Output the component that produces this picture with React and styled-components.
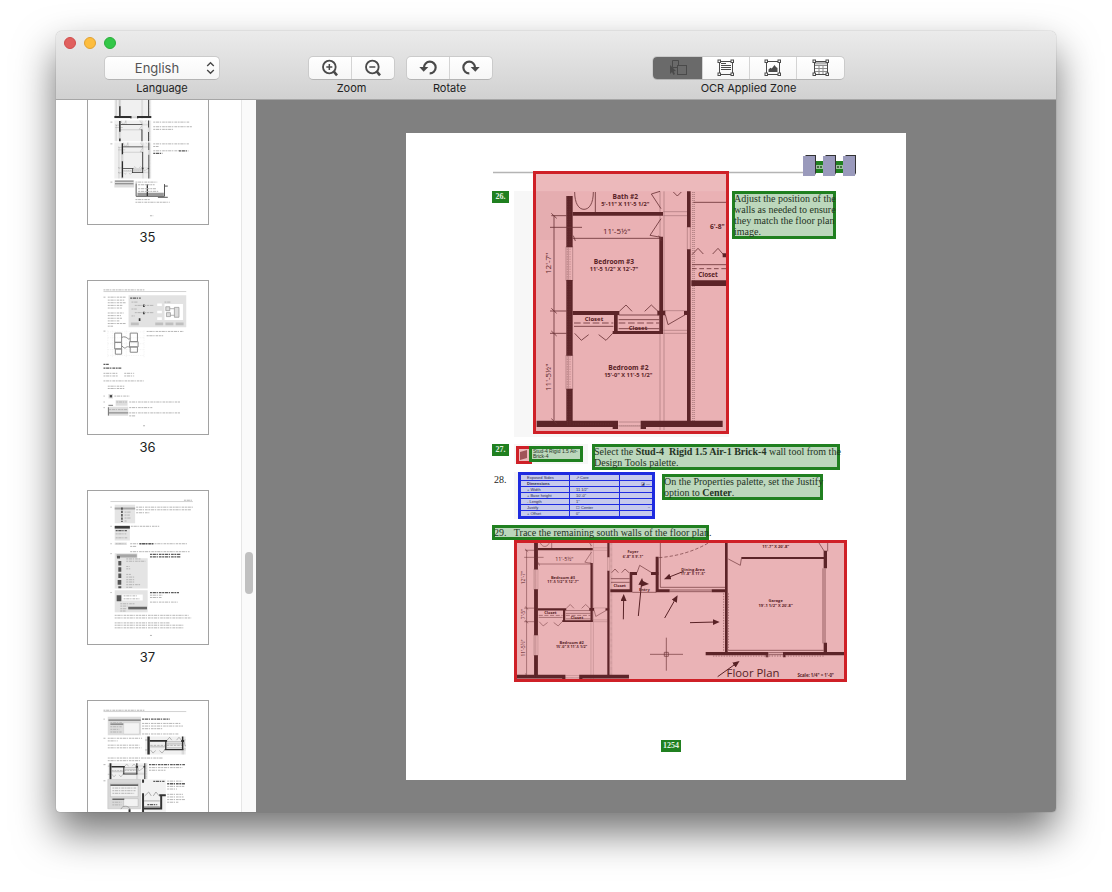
import React, { useState } from "react";
import styled, { createGlobalStyle } from "styled-components";

const GlobalStyle = createGlobalStyle`
  body {
    margin: 0;
    background: #ffffff;
    font-family: Inter, "Liberation Sans", sans-serif;
    color: #222222;
  }
  * {
    box-sizing: border-box;
  }
`;

const Desktop = styled.div`
  display: flex;
  height: 100vh;
  padding: 31px 56px 80px;
  overflow: hidden;
`;

const Window = styled.div`
  display: flex;
  flex: 1;
  flex-direction: column;
  min-width: 0;
  overflow: hidden;
  border-radius: 6px 6px 4px 4px;
  background: #ffffff;
  box-shadow: 0 0 1px rgba(0, 0, 0, 0.5), 0 20px 40px rgba(0, 0, 0, 0.56);
`;

const Toolbar = styled.header`
  padding: 6px 0 4px;
  border-bottom: 1px solid #a6a6a6;
  background: linear-gradient(#ebebeb, #d1d1d1);
`;

const Lights = styled.div`
  display: flex;
  gap: 8px;
  padding-left: 8px;
  margin-bottom: 7px;
`;

const Light = styled.button`
  width: 12px;
  height: 12px;
  padding: 0;
  border: 1px solid ${(props) => props.$edge};
  border-radius: 50%;
  background: ${(props) => props.$color};
`;

const Tools = styled.div`
  display: flex;
  padding-left: 48px;
`;

const Spacer = styled.div`
  flex: ${(props) => props.$grow} 0 0;
`;

const ToolGroup = styled.div`
  display: flex;
  flex-direction: column;
  align-items: center;
  gap: 1px;
  margin-right: ${(props) => props.$gap || 0}px;
  font-size: 11px;
  line-height: 14px;
  white-space: nowrap;
`;

const SelectBox = styled.div`
  position: relative;
  height: 24px;
  svg {
    position: absolute;
    top: 5px;
    right: 5px;
    pointer-events: none;
  }
`;

const LanguageSelect = styled.select`
  width: 116px;
  height: 24px;
  padding: 0 10px 0 0;
  appearance: none;
  border: 1px solid #cbcbcb;
  border-bottom-color: #b4b4b4;
  border-radius: 5px;
  background: linear-gradient(#ffffff, #f6f6f6);
  color: #555555;
  font-family: inherit;
  font-size: 13px;
  text-align: center;
  text-align-last: center;
`;

const Segments = styled.div`
  display: flex;
  height: 24px;
  overflow: hidden;
  border: 1px solid #cbcbcb;
  border-bottom-color: #b4b4b4;
  border-radius: 5px;
  background: linear-gradient(#ffffff, #f6f6f6);
`;

const Segment = styled.button`
  display: flex;
  align-items: center;
  justify-content: center;
  width: ${(props) => props.$width}px;
  padding: 0;
  border: 0;
  background: ${(props) => (props.$active ? "#6a6a6a" : "transparent")};
  color: #4a4a4a;
  & + & {
    border-left: 1px solid #d4d4d4;
  }
`;

const Body = styled.div`
  display: flex;
  flex: 1;
  min-height: 0;
`;

const Sidebar = styled.aside`
  display: flex;
  flex: 0 0 200px;
  overflow: hidden;
`;

const ThumbList = styled.div`
  display: flex;
  flex: 1;
  flex-direction: column;
  align-items: center;
  gap: 35px;
  padding-right: 2px;
  margin-top: -30px;
`;

const Thumb = styled.a`
  display: block;
  color: #222222;
  font-size: 13px;
  line-height: 16px;
  text-align: center;
  text-decoration: none;
  > svg {
    display: block;
    width: 122px;
    height: 155px;
    margin-bottom: 4px;
    border: 1px solid #a2a2a2;
  }
`;

const ScrollTrack = styled.div`
  display: flex;
  flex-direction: column;
  align-items: center;
  width: 15px;
  border-left: 1px solid #e6e6e6;
  background: #fafafa;
`;

const ScrollKnob = styled.div`
  width: 8px;
  height: 42px;
  border-radius: 4px;
  background: #c0c0c0;
`;

const Viewer = styled.main`
  flex: 1;
  min-width: 0;
  padding: 33px 20px;
  overflow: hidden;
  background: #808080;
`;

const Sheet = styled.article`
  max-width: 500px;
  margin: 0 auto;
  padding: 22px 48px 28px 86px;
  background: #ffffff;
  color: #1c1c1c;
  font-family: "Liberation Serif", serif;
  font-size: 10px;
  line-height: 11px;
`;

const SheetHeader = styled.div`
  height: 16px;
  svg {
    display: block;
  }
`;

const Step = styled.section`
  display: flex;
  align-items: flex-start;
  margin-bottom: ${(props) => props.$after || 0}px;
`;

const StepNumber = styled.div`
  flex: 0 0 22px;
  padding-top: ${(props) => props.$top || 0}px;
`;

const Plain = styled.span`
  padding-left: 2px;
`;

const Scan = styled.div`
  display: flex;
  align-items: flex-start;
  flex: none;
  padding: ${(props) => props.$pad};
  margin-right: ${(props) => props.$gap}px;
  background: ${(props) => props.$paper || "#f7f7f7"};
`;

const ImageZone = styled.div`
  border: 3px solid #cf2027;
  background: #ecb9bb;
  svg {
    display: block;
  }
`;

const TextZone = styled.div`
  width: ${(props) => props.$width}px;
  margin-top: ${(props) => props.$top || 0}px;
  border: 2px solid #208020;
  background: #bcd7bc;
  box-shadow: inset 0 0 0 1px #208020;
  color: #243424;
  white-space: nowrap;
`;

const ToolName = styled(TextZone)`
  height: 16px;
  padding: 1px 2px;
  margin-left: -3px;
  font-family: "Liberation Sans", sans-serif;
  font-size: 5px;
  line-height: 5px;
`;

const Chip = styled.span`
  display: block;
  width: ${(props) => props.$width || 17}px;
  border: 2px solid #208020;
  background: #208020;
  color: #e4f2e4;
  font-size: 8px;
  font-weight: bold;
  line-height: 8px;
  text-align: center;
`;

const PropertyTable = styled.table`
  width: 137px;
  border: 3px solid #1e2be0;
  border-collapse: collapse;
  background: #c6caec;
  color: #2a2c50;
  font-family: "Liberation Sans", sans-serif;
  font-size: 4px;
  line-height: 5px;
  td {
    height: 6px;
    padding: 0 6px;
    border: 1px solid #1e2be0;
  }
  td:first-child {
    width: 50px;
  }
  td:last-child {
    width: 34px;
    padding: 0 2px;
    text-align: right;
  }
`;

const Footer = styled.footer`
  display: flex;
  padding: 58px 0 0 169px;
`;

function ChevronsIcon() {
  return (
    <svg width="9" height="14" viewBox="0 0 9 14" fill="none" stroke="#4a4a4a" strokeWidth="1.4">
      <path d="M1.2 5 L4.5 1.7 L7.8 5 M1.2 9 L4.5 12.3 L7.8 9" />
    </svg>
  );
}

function MagnifierIcon({ plus }) {
  return (
    <svg width="18" height="18" viewBox="0 0 54 54" fill="none" stroke="currentColor">
      <circle cx="25" cy="24" r="19" strokeWidth="5.5" />
      <path d="M38 37 L48 49" strokeWidth="7.5" />
      <path d="M16 24 H34" strokeWidth="4.5" />
      {plus && <path d="M25 15 V33" strokeWidth="4.5" />}
    </svg>
  );
}

function RotateIcon({ right }) {
  return (
    <svg width="18" height="18" viewBox="0 0 54 54">
      <g transform={right ? "translate(54 0) scale(-1 1)" : undefined}>
        <path
          d="M15 26 A17.5 17.5 0 1 1 32 43"
          fill="none"
          stroke="currentColor"
          strokeWidth="6.5"
        />
        <path d="M1 24 H28 L14 38 Z" fill="currentColor" />
      </g>
    </svg>
  );
}

function FrameIcon({ children }) {
  return (
    <svg width="18" height="18" viewBox="0 0 18 18" fill="none" stroke="currentColor">
      <path d="M2.5 2.5 H15.5 V15.5 H2.5 Z" />
      {children}
      {[1.5, 14.5].map((x) =>
        [1.5, 14.5].map((y) => (
          <rect key={`${x}-${y}`} x={x - 0.5} y={y - 0.5} width="2.5" height="2.5" fill="#ffffff" />
        ))
      )}
    </svg>
  );
}

function SelectionIcon() {
  return (
    <svg width="18" height="18" viewBox="0 0 18 18" fill="none" stroke="currentColor">
      <path d="M9.5 7 V1.5 H3.5 V8.5 H8" />
      <rect x="8.5" y="6.5" width="9" height="9" />
      <path d="M1 6 V15 L3 13 L4.5 16 L6 15 L4.7 12.3 L7 12 Z" fill="currentColor" stroke="none" />
    </svg>
  );
}

function TextZoneIcon() {
  return (
    <FrameIcon>
      <path d="M4 4.5 H9 M4 6.5 H14 M4 8.5 H14 M4 10.5 H14" />
    </FrameIcon>
  );
}

function ImageZoneIcon() {
  return (
    <FrameIcon>
      <path
        d="M4.5 13 V10.5 L6.5 8.8 L7.8 9.5 L10.5 6 L12 8 L13.5 9 V13 Z"
        fill="currentColor"
        stroke="none"
      />
    </FrameIcon>
  );
}

function TableZoneIcon() {
  return (
    <FrameIcon>
      <path d="M3 3 H15 V5.5 H3 Z" fill="#b5b5b5" stroke="none" />
      <path d="M3 6.5 H15 M3 9.5 H15 M3 12.5 H15 M7 6 V15 M11 6 V15" stroke="#8c8c8c" />
    </FrameIcon>
  );
}

function HeaderArt() {
  return (
    <svg width="366" height="22" viewBox="0 0 366 22">
      <path d="M1 17.5 H312" stroke="#b4b4b4" strokeWidth="1.5" />
      <path d="M313 6 H351 V18 H313 Z" fill="#208020" />
      <path d="M313 10 H351 V14 H313 Z" fill="#9cc49c" />
      <path d="M325 12 H331 M345 12 H351" stroke="#456b45" strokeDasharray="2 1" strokeWidth="2" />
      {[312, 332, 352].map((x) => (
        <g key={x}>
          <path d={`M${x} 2 L${x + 2} 0 H${x + 12} V18 L${x + 11} 20 Z`} fill="#333333" />
          <rect x={x - 1} y="1" width="12" height="20" fill="#9a9abc" />
        </g>
      ))}
    </svg>
  );
}

/* Closets, doors and windows shared by every drawing of the west wing. */
function BedroomPlan() {
  return (
    <>
      <g stroke="#a87679" strokeWidth="2" fill="none">
        <path d="M540 154 V870 M552 154 V870 M550 215 H622 M550 227 H622 M550 512 H622 M550 580 H622 M550 571 H622" />
        <path d="M258 320 V422 H278 V320 Z M258 645 V748 H278 V645 Z M265 322 V420 M265 647 V746" />
        <path d="M622 260 V330 M631 260 V330 M416 846 H482 M416 858 H482" />
      </g>
      <path
        d="M638 156 V852 M643 156 V852 M262 857 H640"
        stroke="#b78688"
        strokeWidth="4"
        strokeDasharray="3 3"
        fill="none"
      />
      <g fill="#5c2428">
        <path d="M259 168 H278 V322 H259 Z M259 420 H278 V647 H259 Z M259 746 H278 V856 H259 Z" />
        <path d="M278 216 H549 V227 H278 Z M538 290 H549 V580 H538 Z M278 513 H418 V525 H278 Z" />
        <path d="M402 520 H413 V580 H402 Z M398 573 H549 V582 H398 Z M532 512 H556 V526 H532 Z M612 513 H630 V525 H612 Z" />
        <path d="M621 154 H632 V262 H621 Z M621 328 H632 V850 H621 Z" />
        <path d="M170 842 H414 V861 H170 Z M398 850 H414 V867 H398 Z M482 842 H728 V861 H482 Z M482 850 H498 V867 H482 Z" />
      </g>
      <path
        d="M262 168 V854 M270 168 V854 M280 852 H400"
        stroke="#7b4347"
        strokeWidth="1.5"
        strokeDasharray="2 3"
      />
      <g stroke="#6b3437" strokeWidth="2.5" fill="none">
        <path d="M222 227 V842 M214 220 L230 235 M214 505 L230 520 M214 573 L230 588 M214 836 L230 851 M210 513 H260 M210 580 H260 M214 227 H260" />
        <path d="M210 262 H306 M278 295 H545 M280 287 L286 303 M536 287 L544 303" />
        <path d="M284 156 C284 190 296 208 312 208 C328 208 340 190 340 156 M346 156 V216" />
        <path d="M540 154 L514 162 L543 206 M543 236 L510 286 L543 292" />
        <path d="M556 524 L564 554 L616 524 M580 156 L592 168 L604 156" />
        <path d="M418 514 L438 495 L456 514 M494 514 L514 495 L534 514" />
        <path d="M284 580 L304 601 L326 584 M356 584 L378 601 L398 580" />
        <path d="M282 559 H400 M416 539 H538 M416 566 H538 M416 525 H538" />
        <path d="M282 549 H400 M416 549 H538" strokeDasharray="20 8" />
      </g>
    </>
  );
}

function PlanLabel({ x, y, size, children, ...rest }) {
  return (
    <text x={x} y={y} fontSize={size} textAnchor="middle" fill="#582226" {...rest}>
      {children}
    </text>
  );
}

const planFont = "'Open Sans', 'Liberation Sans', sans-serif";

function WestWingPlan() {
  return (
    <svg width="190" height="257" viewBox="168 102 570 771" fontFamily={planFont}>
      <path d="M168 154 H738 V873 H168 Z" fill="#eab1b4" />
      <path d="M168 154 H278 V300 H168 Z" fill="#e5adb0" />
      <BedroomPlan />
      <g stroke="#6b3437" strokeWidth="2.5" fill="none">
        <path d="M640 187 H738 M636 344 L654 325 L670 342 M698 342 L714 325 L732 346 M636 374 H738" />
        <path d="M636 386 H738" strokeDasharray="14 8" />
      </g>
      <path d="M634 421 H738 V438 H634 Z M728 340 H738 V352 H728 Z" fill="#5c2428" />
      <PlanLabel x={436} y={178} size={20} fontWeight="bold">Bath #2</PlanLabel>
      <PlanLabel x={436} y={199} size={17} fontWeight="bold">5'-11" X 11'-5 1/2"</PlanLabel>
      <PlanLabel x={410} y={282} size={24}>11'-5½"</PlanLabel>
      <PlanLabel x={402} y={371} size={20} fontWeight="bold">Bedroom #3</PlanLabel>
      <PlanLabel x={402} y={392} size={17} fontWeight="bold">11'-5 1/2" X 12'-7"</PlanLabel>
      <PlanLabel x={342} y={543} size={18} fontWeight="bold">Closet</PlanLabel>
      <PlanLabel x={474} y={569} size={18} fontWeight="bold">Closet</PlanLabel>
      <PlanLabel x={684} y={412} size={19} fontWeight="bold">Closet</PlanLabel>
      <PlanLabel x={445} y={690} size={20} fontWeight="bold">Bedroom #2</PlanLabel>
      <PlanLabel x={445} y={711} size={17} fontWeight="bold">15'-0" X 11'-5 1/2"</PlanLabel>
      <PlanLabel x={712} y={268} size={20} fontWeight="bold">6'-8"</PlanLabel>
      <PlanLabel size={24} transform="translate(214 370) rotate(-90)">12'-7"</PlanLabel>
      <PlanLabel size={24} transform="translate(212 712) rotate(-90)">11'-5½"</PlanLabel>
    </svg>
  );
}

const arrows = [
  [371, 268, 372, 204],
  [416, 258, 426, 156],
  [495, 264, 528, 206],
  [571, 278, 648, 276],
  [552, 124, 504, 143],
  [654, 440, 710, 400],
];

function FullPlan() {
  return (
    <svg width="327" height="136" viewBox="52 39 981 408" fontFamily={planFont}>
      <defs>
        <marker id="head" markerWidth="7" markerHeight="6" refX="3" refY="3" orient="auto">
          <path d="M0 0 L7 3 L0 6 Z" fill="#582226" />
        </marker>
      </defs>
      <path d="M52 39 H1033 V447 H52 Z" fill="#eab3b6" />
      <g transform="translate(-54 -77) scale(0.607)">
        <BedroomPlan />
      </g>
      <g fill="#5c2428">
        <path d="M332 178 H398 V187 H332 Z M390 128 H398 V187 H390 Z M390 126 H412 V135 H390 Z M454 126 H476 V135 H454 Z" />
        <path d="M468 80 H477 V187 H468 Z M468 178 H510 V187 H468 Z M636 178 H684 V187 H636 Z M676 39 H684 V372 H676 Z" />
        <path d="M618 366 H806 V376 H618 Z M850 366 H1033 V376 H850 Z M798 372 H806 V382 H798 Z M850 372 H858 V382 H850 Z" />
        <path d="M725 81 H974 V87 H725 Z M972 62 H982 V115 H972 Z M972 338 H982 V370 H972 Z" />
      </g>
      <g stroke="#6b3437" strokeWidth="2" fill="none">
        <path d="M482 39 V172 H676 M510 180 H636 M510 185 H636 M970 115 V340 M976 115 V340 M686 361 H972 M686 87 L722 106 L725 86" />
        <path d="M334 146 H390 M334 157 H390 M336 128 L346 117 L356 128 M366 128 L376 117 L388 128 M412 128 L420 106 L456 128" />
        <path d="M806 368 H850 M806 374 H850 M958 39 L974 64 M984 39 V64 M398 187 H470" />
        <path d="M478 83 Q562 76 626 39" strokeDasharray="10 6" />
        <path d="M500 323 V422 M451 373 H550 M494 367 H506 V379 H494 Z" />
      </g>
      <path d="M686 190 V365 M672 190 V365 M640 378 H976" stroke="#a06a6d" strokeWidth="3" strokeDasharray="4 4" />
      <path d="M424 150 L448 162 L424 170 Z" fill="#582226" />
      {arrows.map(([x1, y1, x2, y2]) => (
        <line
          key={`${x1}-${y1}`}
          x1={x1}
          y1={y1}
          x2={x2}
          y2={y2}
          stroke="#582226"
          strokeWidth="3"
          markerEnd="url(#head)"
        />
      ))}
      <PlanLabel x={194} y={92} size={16}>11'-5½"</PlanLabel>
      <PlanLabel x={190} y={146} size={12} fontWeight="bold">Bedroom #3</PlanLabel>
      <PlanLabel x={190} y={159} size={11} fontWeight="bold">11'-5 1/2" X 12'-7"</PlanLabel>
      <PlanLabel x={152} y={252} size={12} fontWeight="bold">Closet</PlanLabel>
      <PlanLabel x={232} y={266} size={12} fontWeight="bold">Closet</PlanLabel>
      <PlanLabel x={216} y={342} size={12} fontWeight="bold">Bedroom #2</PlanLabel>
      <PlanLabel x={216} y={355} size={11} fontWeight="bold">15'-0" X 11'-5 1/2"</PlanLabel>
      <PlanLabel x={400} y={70} size={12} fontWeight="bold">Foyer</PlanLabel>
      <PlanLabel x={400} y={83} size={11} fontWeight="bold">6'-8" X 9'-1"</PlanLabel>
      <PlanLabel x={360} y={171} size={12} fontWeight="bold">Closet</PlanLabel>
      <PlanLabel x={434} y={183} size={12} fontWeight="bold">Entry</PlanLabel>
      <PlanLabel x={580} y={122} size={12} fontWeight="bold">Dining Area</PlanLabel>
      <PlanLabel x={580} y={135} size={11} fontWeight="bold">11'-8" X 11'-5"</PlanLabel>
      <PlanLabel x={828} y={53} size={12} fontWeight="bold">11'-7" X 20'-8"</PlanLabel>
      <PlanLabel x={828} y={216} size={12} fontWeight="bold">Garage</PlanLabel>
      <PlanLabel x={828} y={230} size={12} fontWeight="bold">19'-1 1/2" X 20'-8"</PlanLabel>
      <PlanLabel x={760} y={440} size={34}>Floor Plan</PlanLabel>
      <PlanLabel x={948} y={440} size={13} fontWeight="bold">Scale: 1/4" = 1'-0"</PlanLabel>
      <PlanLabel size={15} transform="translate(76 143) rotate(-90)">12'-7"</PlanLabel>
      <PlanLabel size={15} transform="translate(76 252) rotate(-90)">7'-5"</PlanLabel>
      <PlanLabel size={15} transform="translate(76 354) rotate(-90)">11'-5½"</PlanLabel>
    </svg>
  );
}

/* Each row is [x, y, width, bold]. */
function Copy({ rows }) {
  return rows.map(([x, y, width, bold]) => (
    <path
      key={`${x}-${y}`}
      d={`M${x} ${y} h${width}`}
      stroke={bold ? "#5a5a5a" : "#b4b4b4"}
      strokeWidth={bold ? 4 : 3}
      strokeDasharray="6 2 10 2 4 3 8 2"
    />
  ));
}

function MiniPlan({ x, y, width, height, view }) {
  return (
    <svg x={x} y={y} width={width} height={height} viewBox={view} preserveAspectRatio="none">
      <path d="M0 0 H1200 V900 H0 Z" fill="#f0f0f0" />
      <g style={{ filter: "grayscale(1)" }}>
        <BedroomPlan />
      </g>
    </svg>
  );
}

function Page35() {
  return (
    <>
      <MiniPlan x={132} y={0} width={112} height={70} view="200 640 460 230" />
      <MiniPlan x={132} y={75} width={112} height={63} view="200 160 460 300" />
      <MiniPlan x={132} y={142} width={112} height={109} view="160 160 500 500" />
      <path d="M132 256 H192 V278 H132 Z" fill="#dddddd" />
      <path d="M134 259 H190 M134 267 H190" stroke="#777777" strokeWidth="3" />
      <path d="M198 266 V305 H284 V268 M264 308 H294 M284 274 H294" fill="none" stroke="#555555" strokeWidth="3" />
      <path d="M202 294 H282 V304 H202 Z" fill="#999999" />
      <path d="M232 268 V304" stroke="#333333" strokeWidth="4" />
      <Copy
        rows={[
          [120, 80, 6],
          [250, 80, 110],
          [250, 94, 118],
          [250, 102, 60],
          [120, 146, 6],
          [250, 146, 108],
          [250, 154, 16],
          [250, 167, 80],
          [328, 167, 28, true],
          [250, 175, 28, true],
          [120, 262, 6],
          [196, 262, 66],
          [204, 270, 50],
          [204, 282, 54],
          [204, 290, 62],
          [196, 315, 44],
          [196, 323, 104],
          [240, 364, 10],
        ]}
      />
    </>
  );
}

function Page36() {
  return (
    <>
      <path d="M99 62 H350" stroke="#bbbbbb" strokeWidth="2" />
      <path d="M175 73 H350 V170 H175 Z" fill="#e2e2e2" />
      <path d="M284 100 H340 V148 H284 Z M262 98 h14 v8 h-14 Z M262 120 h14 v8 h-14 Z M262 140 h14 v8 h-14 Z" fill="#ffffff" />
      <path d="M219 101 h5 v8 h-5 Z M219 123 h5 v8 h-5 Z M206 143 h5 v8 h-5 Z" fill="#333333" />
      <path d="M182 156 h24 v8 h-24 Z M256 156 h24 v8 h-24 Z M287 156 h24 v8 h-24 Z M318 156 h24 v8 h-24 Z" fill="#bfbfbf" />
      <path
        d="M288 108 h12 v12 h-12 Z M290 126 h12 v12 h-12 Z M314 110 h14 v30 h-14 Z M300 114 H314 M302 134 H314"
        fill="#dddddd"
        stroke="#8c8c8c"
        strokeWidth="2"
      />
      <path
        d="M112 180 V262 M126 180 V262 M168 180 V262 M222 180 V262 M112 184 H224 M112 202 H224 M112 220 H224 M112 238 H224 M112 256 H224"
        stroke="#e0e0e0"
        strokeDasharray="4 3"
      />
      <path
        d="M133 188 h21 v28 h-21 Z M133 216 h21 v20 h-21 Z M135 236 h19 v16 h-19 Z M180 188 h22 v26 h-22 Z M178 214 h26 v16 h-26 Z M180 230 h22 v16 h-22 Z M154 201 C172 194 172 212 180 204 M154 226 C170 244 164 222 180 232"
        fill="none"
        stroke="#888888"
        strokeWidth="3"
      />
      <path d="M114 373 h14 v13 h-14 Z M136 392 h36 v16 h-36 Z M112 411 h62 v28 h-62 Z" fill="#dedede" />
      <path d="M114 407 H128 M114 413 V438 M114 430 H174" stroke="#777777" strokeWidth="3" />
      <path d="M118 376 h7 v7 h-7 Z" fill="#444444" />
      <Copy
        rows={[
          [99, 57, 124],
          [180, 82, 32, true],
          [184, 94, 18],
          [194, 104, 58],
          [184, 115, 16],
          [194, 126, 58],
          [184, 136, 10],
          [284, 94, 18],
          [99, 79, 6],
          [112, 79, 54],
          [112, 88, 50],
          [112, 96, 54],
          [112, 104, 46],
          [112, 112, 44],
          [112, 127, 48],
          [112, 135, 40],
          [112, 143, 44],
          [112, 151, 36],
          [112, 159, 54],
          [112, 167, 16],
          [99, 182, 6],
          [230, 183, 112],
          [230, 196, 50],
          [99, 283, 16, true],
          [99, 294, 54, true],
          [99, 310, 42],
          [162, 310, 30],
          [99, 318, 44],
          [162, 318, 30],
          [99, 333, 122],
          [112, 349, 50],
          [112, 356, 50],
          [99, 379, 4],
          [132, 379, 46],
          [99, 397, 4],
          [138, 397, 32],
          [177, 397, 156],
          [99, 414, 4],
          [116, 420, 56],
          [177, 414, 70],
          [177, 430, 154],
          [177, 439, 20],
          [219, 469, 8],
        ]}
      />
    </>
  );
}

function Page37() {
  return (
    <>
      <path d="M120 62 H370" stroke="#bbbbbb" strokeWidth="2" />
      <path d="M133 72 H195 V128 H133 Z M133 133 H179 V180 H133 Z M133 186 H170 V194 H133 Z M133 219 H202 V326 H133 Z M196 234 H233 V326 H196 Z M133 331 H233 V398 H133 Z" fill="#e4e4e4" />
      <path d="M133 80 H195 V86 H133 Z M139 222 H200 V232 H139 Z" fill="#a6a6a6" />
      <path d="M133 136 H179 V144 H133 Z" fill="#3a3a3a" />
      <path d="M155 80 V124" stroke="#333333" strokeWidth="4" strokeDasharray="7 3" />
      <path d="M144 242 h9 v14 h-9 Z M144 261 h9 v14 h-9 Z M144 280 h9 v14 h-9 Z M142 300 h11 v14 h-11 Z M144 319 h9 v6 h-9 Z M139 346 h14 v18 h-14 Z M140 227 h9 v8 h-9 Z" fill="#555555" />
      <path d="M156 344 h62 v18 h-62 Z" fill="#ffffff" />
      <path d="M174 385 H231" stroke="#666666" strokeWidth="8" />
      <Copy
        rows={[
          [343, 58, 27],
          [120, 79, 4],
          [198, 79, 172],
          [198, 87, 168],
          [198, 96, 40],
          [163, 94, 20],
          [163, 103, 16],
          [163, 112, 18],
          [163, 121, 8],
          [120, 137, 4],
          [182, 137, 86],
          [136, 150, 34, true],
          [136, 160, 32],
          [136, 172, 36],
          [120, 190, 4],
          [136, 190, 30],
          [180, 190, 172],
          [208, 190, 42, true],
          [180, 198, 18],
          [180, 214, 180],
          [240, 222, 92, true],
          [240, 230, 94, true],
          [120, 220, 4],
          [168, 236, 44],
          [168, 243, 58],
          [168, 259, 10],
          [168, 266, 12],
          [168, 283, 14],
          [168, 291, 26],
          [168, 299, 24],
          [168, 306, 24],
          [168, 314, 42],
          [168, 322, 18],
          [120, 338, 4],
          [240, 338, 88, true],
          [240, 346, 38],
          [240, 353, 36],
          [240, 367, 84],
          [160, 348, 40],
          [160, 357, 48],
          [150, 372, 44],
          [150, 379, 22],
          [150, 387, 20],
          [150, 394, 16],
          [133, 407, 224],
          [133, 415, 232],
          [133, 430, 166],
          [133, 437, 208],
          [133, 445, 208],
          [240, 468, 8],
        ]}
      />
    </>
  );
}

function Page38() {
  return (
    <>
      <path d="M99 62 H350" stroke="#bbbbbb" strokeWidth="2" />
      <path d="M112 78 H213 V134 H112 Z" fill="#dddddd" />
      <path d="M114 88 H212 M120 100 H160" stroke="#777777" strokeWidth="4" />
      <path d="M160 96 H208 V130 H160 Z" fill="#f4f4f4" stroke="#bbbbbb" />
      <MiniPlan x={225} y={138} width={124} height={54} view="240 490 330 120" />
      <MiniPlan x={112} y={219} width={122} height={48} view="240 490 420 130" />
      <path d="M112 268 H212 V357 H112 Z" fill="#d9d9d9" stroke="#a6a6a6" />
      <path d="M120 280 H204 V320 H120 Z M160 326 H204 V350 H160 Z" fill="#f2f2f2" stroke="#999999" />
      <path d="M120 285 H204 M126 328 H162" stroke="#666666" strokeWidth="5" />
      <path d="M214 268 H288 V370 H214 Z" fill="#f2f2f2" />
      <path
        d="M219 268 V278 M219 310 V370 M219 356 H274 V318 M268 316 H288 M178 358 V370"
        fill="none"
        stroke="#333333"
        strokeWidth="6"
      />
      <path
        d="M224 318 L236 306 L244 318 M250 318 L258 306 L268 318 M152 358 C156 346 174 346 180 358 M222 333 H270 M222 350 H270"
        fill="none"
        stroke="#888888"
        strokeWidth="2"
      />
      <Copy
        rows={[
          [99, 58, 124],
          [99, 85, 4],
          [216, 85, 84, true],
          [216, 98, 116],
          [216, 106, 124],
          [216, 114, 64],
          [216, 130, 112],
          [120, 96, 36],
          [120, 108, 34],
          [120, 116, 28],
          [120, 124, 34],
          [99, 143, 6],
          [112, 143, 104],
          [112, 151, 30],
          [112, 164, 96],
          [112, 172, 102],
          [112, 203, 168],
          [112, 211, 98],
          [99, 223, 6],
          [237, 223, 110, true],
          [237, 232, 102],
          [237, 240, 50],
          [99, 272, 6],
          [292, 273, 46],
          [292, 281, 54, true],
          [292, 289, 52],
          [292, 297, 30],
          [292, 313, 48],
          [292, 321, 50],
          [292, 329, 54],
          [292, 337, 34],
          [250, 274, 34, true],
          [232, 344, 30, true],
          [126, 294, 74],
          [126, 302, 70],
          [126, 310, 66],
          [126, 337, 28],
          [126, 345, 28],
        ]}
      />
    </>
  );
}

const pages = [
  { number: 35, top: -75, Art: Page35 },
  { number: 36, top: 30, Art: Page36 },
  { number: 37, top: 30, Art: Page37 },
  { number: 38, top: 30, Art: Page38 },
];

const zoneTools = [
  { name: "Select zone", width: 49, Icon: SelectionIcon },
  { name: "Text zone", width: 47, Icon: TextZoneIcon },
  { name: "Image zone", width: 47, Icon: ImageZoneIcon },
  { name: "Table zone", width: 48, Icon: TableZoneIcon },
];

const properties = [
  ["Exposed Sides", "↗ Core", ""],
  ["Dimensions", "", "◪ —"],
  ["+ Width", "11 1/2\"", ""],
  ["+ Base height", "10'-0\"", ""],
  ["- Length", "1\"", ""],
  ["Justify", "☐ Center", "~"],
  ["+ Offset", "0\"", ""],
];

export default function App() {
  const [tool, setTool] = useState("Select zone");

  return (
    <Desktop>
      <GlobalStyle />
      <Window>
        <Toolbar>
          <Lights>
            <Light aria-label="Close" $color="#e0605e" $edge="#d04c4c" />
            <Light aria-label="Minimize" $color="#fdbd3e" $edge="#dfa033" />
            <Light aria-label="Full screen" $color="#33c748" $edge="#2aad3a" />
          </Lights>
          <Tools>
            <ToolGroup>
              <SelectBox>
                <LanguageSelect id="language" defaultValue="English">
                  <option>English</option>
                </LanguageSelect>
                <ChevronsIcon />
              </SelectBox>
              <label htmlFor="language">Language</label>
            </ToolGroup>
            <Spacer $grow={88} />
            <ToolGroup $gap={11}>
              <Segments role="group" aria-labelledby="zoom">
                <Segment aria-label="Zoom in" $width={42}>
                  <MagnifierIcon plus />
                </Segment>
                <Segment aria-label="Zoom out" $width={43}>
                  <MagnifierIcon />
                </Segment>
              </Segments>
              <span id="zoom">Zoom</span>
            </ToolGroup>
            <ToolGroup>
              <Segments role="group" aria-labelledby="rotate">
                <Segment aria-label="Rotate left" $width={42}>
                  <RotateIcon />
                </Segment>
                <Segment aria-label="Rotate right" $width={43}>
                  <RotateIcon right />
                </Segment>
              </Segments>
              <span id="rotate">Rotate</span>
            </ToolGroup>
            <Spacer $grow={159} />
            <ToolGroup>
              <Segments role="group" aria-labelledby="zones">
                {zoneTools.map(({ name, width, Icon }) => (
                  <Segment
                    key={name}
                    aria-label={name}
                    aria-pressed={tool === name}
                    $width={width}
                    $active={tool === name}
                    onClick={() => setTool(name)}
                  >
                    <Icon />
                  </Segment>
                ))}
              </Segments>
              <span id="zones">OCR Applied Zone</span>
            </ToolGroup>
            <Spacer $grow={211} />
          </Tools>
        </Toolbar>
        <Body>
          <Sidebar>
            <ThumbList>
              {pages.map(({ number, top, Art }) => (
                <Thumb key={number} href={`#page-${number}`}>
                  <svg viewBox={`53 ${top} 362 464`}>
                    <Art />
                  </svg>
                  {number}
                </Thumb>
              ))}
            </ThumbList>
            <ScrollTrack>
              <Spacer $grow={452} />
              <ScrollKnob />
              <Spacer $grow={218} />
            </ScrollTrack>
          </Sidebar>
          <Viewer>
            <Sheet>
              <SheetHeader>
                <HeaderArt />
              </SheetHeader>
              <Step $after={7}>
                <StepNumber $top={20}>
                  <Chip>26.</Chip>
                </StepNumber>
                <Scan
                  $pad="0 0 3px 19px"
                  $gap={3}
                  $paper="linear-gradient(transparent 20px, #f7f7f7 20px)"
                >
                  <ImageZone>
                    <WestWingPlan />
                  </ImageZone>
                </Scan>
                <TextZone $width={104} $top={20}>
                  Adjust the position of the
                  <br />
                  walls as needed to ensure
                  <br />
                  they match the floor plan
                  <br />
                  image.
                </TextZone>
              </Step>
              <Step $after={2}>
                <StepNumber>
                  <Chip>27.</Chip>
                </StepNumber>
                <Scan $pad="2px 5px 0 2px" $gap={4}>
                  <ImageZone>
                    <svg width="10" height="12" viewBox="0 0 10 12">
                      <path d="M1 3 L8 1 V9 L1 11 Z" fill="#a05458" />
                    </svg>
                  </ImageZone>
                  <ToolName $width={54}>
                    Stud-4 Rigid 1.5 Air-
                    <br />
                    Brick-4
                  </ToolName>
                </Scan>
                <TextZone $width={248}>
                  Select the <b>Stud-4&nbsp; Rigid 1.5 Air-1 Brick-4</b> wall tool from the
                  <br />
                  Design Tools palette.
                </TextZone>
              </Step>
              <Step $after={6}>
                <StepNumber $top={2}>
                  <Plain>28.</Plain>
                </StepNumber>
                <Scan $pad="0 0 0 4px" $gap={7}>
                  <PropertyTable>
                    <tbody>
                      {properties.map(([name, value, mark]) => (
                        <tr key={name}>
                          <td>{name === "Dimensions" ? <b>{name}</b> : name}</td>
                          <td>{value}</td>
                          <td>{mark}</td>
                        </tr>
                      ))}
                    </tbody>
                  </PropertyTable>
                </Scan>
                <TextZone $width={161} $top={2}>
                  On the Properties palette, set the Justify
                  <br />
                  option to <b>Center</b>.
                </TextZone>
              </Step>
              <Step>
                <TextZone $width={217}>
                  29.&nbsp;&nbsp; Trace the remaining south walls of the floor plan.
                </TextZone>
              </Step>
              <Scan $pad="0 0 0 22px" $paper="#ffffff">
                <ImageZone>
                  <FullPlan />
                </ImageZone>
              </Scan>
              <Footer>
                <Chip $width={20}>1254</Chip>
              </Footer>
            </Sheet>
          </Viewer>
        </Body>
      </Window>
    </Desktop>
  );
}
